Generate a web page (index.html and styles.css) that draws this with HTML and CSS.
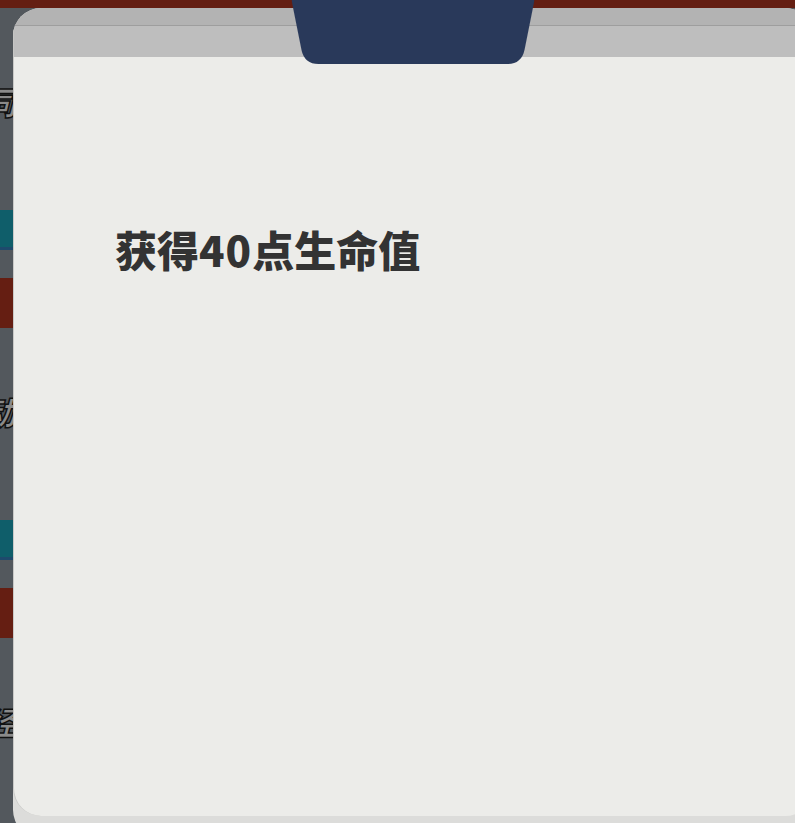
FILE: index.html
```html
<!DOCTYPE html>
<html lang="zh-CN">
<head>
<meta charset="utf-8">
<title>获得40点生命值</title>
<link rel="stylesheet" href="styles.css">
</head>
<body>
<div class="page">
  <div class="topbar"></div>
  <div class="list">
    <div class="item">
      <div class="item-title">共同</div>
      <div class="bar bar-teal"></div>
      <div class="bar bar-red"></div>
    </div>
    <div class="item">
      <div class="item-title">活动</div>
      <div class="bar bar-teal"></div>
      <div class="bar bar-red"></div>
    </div>
    <div class="item">
      <div class="item-title">取经</div>
    </div>
  </div>

  <div class="modal">
    <div class="modal-tab">
      <svg width="243" height="64" viewBox="0 0 243 64"><path d="M0 0 H243 L233 50 Q230 64 216 64 H27 Q13 64 10 50 Z" fill="#29395a"/></svg>
    </div>
    <div class="modal-head">
      <div class="head-top"></div>
      <div class="head-bottom"></div>
    </div>
    <div class="modal-body">
      <div class="reward">获得<span class="num">40</span>点生命值</div>
    </div>
  </div>
</div>
</body>
</html>
```
FILE: styles.css
```css
* { box-sizing: border-box; }
html, body { margin: 0; padding: 0; }
body {
  width: 795px;
  height: 823px;
  overflow: hidden;
  background: #53585d;
  font-family: "Noto Sans CJK SC", "Noto Sans", sans-serif;
}
.page {
  position: relative;
  width: 795px;
  height: 823px;
  overflow: hidden;
}
.topbar {
  height: 8px;
  background: #641e12;
}
.list {
  width: 13px;
  overflow: hidden;
  padding-top: 10px;
  display: flex;
  flex-direction: column;
}
.item {
  display: flex;
  flex-direction: column;
}
.item-title {
  margin-top: 65px;
  height: 36px;
  display: flex;
  justify-content: flex-end;
  white-space: nowrap;
  font-size: 32px;
  line-height: 36px;
  font-weight: 900;
  font-style: italic;
  color: #8a8a8a;
  -webkit-text-stroke: 1.5px #111;
  margin-right: -3px;
}
.bar { height: 40px; }
.bar-teal {
  margin-top: 91px;
  background: #0f5e6a;
  border-bottom: 3px solid #1e4a6c;
}
.bar-red {
  margin-top: 28px;
  height: 50px;
  background: #651e12;
}

.modal {
  position: absolute;
  left: 13px;
  top: 8px;
  width: 800px;
  height: 830px;
  border-radius: 28px;
  background: #dcdcda;
  display: flex;
  flex-direction: column;
}
.modal-tab {
  position: absolute;
  top: -8px;
  left: 50%;
  transform: translateX(-50%);
  width: 243px;
  height: 64px;
  line-height: 0;
}
.modal-head {
  border-radius: 28px 28px 0 0;
  overflow: hidden;
  display: flex;
  flex-direction: column;
}
.head-top {
  height: 18px;
  background: #b3b3b3;
  border-bottom: 1px solid #9e9e9e;
}
.head-bottom {
  height: 31px;
  background: #bebebe;
  border-left: 1px solid #c6c6c4;
}
.modal-body {
  height: 759px;
  background: #ecece9;
  border-left: 1px solid #c9c9c7;
  border-radius: 0 0 28px 28px;
  padding: 167px 0 0 101px;
}
.reward {
  font-size: 42px;
  line-height: 50px;
  font-weight: 900;
  color: #333333;
}
.num {
  letter-spacing: 1px;
}
```
